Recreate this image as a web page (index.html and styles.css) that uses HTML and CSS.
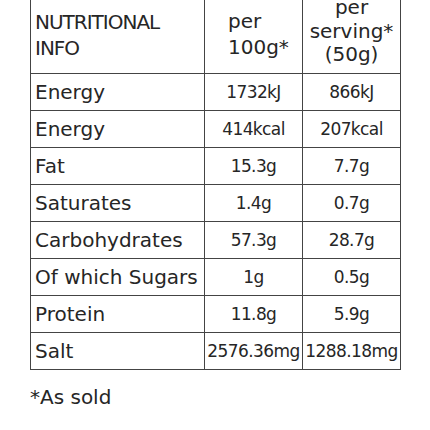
FILE: index.html
```html
<!DOCTYPE html>
<html lang="en">

<head>
    <meta charset="UTF-8">
    <meta name="viewport" content="width=device-width, initial-scale=1.0">
    <title>Nutritional Info</title>
    <link rel="stylesheet" href="styles.css">
</head>

<body>
    <div class="nutrition">
        <table class="facts">
            <colgroup>
                <col class="col-name">
                <col class="col-value">
                <col class="col-value">
            </colgroup>
            <thead>
                <tr>
                    <th class="name">NUTRITIONAL<br>INFO</th>
                    <th class="per-100">per<br>100g*</th>
                    <th class="per-serving">per<br>serving*<br>(50g)</th>
                </tr>
            </thead>
            <tbody>
                <tr>
                    <td class="name">Energy</td>
                    <td class="value">1732kJ</td>
                    <td class="value">866kJ</td>
                </tr>
                <tr>
                    <td class="name">Energy</td>
                    <td class="value">414kcal</td>
                    <td class="value">207kcal</td>
                </tr>
                <tr>
                    <td class="name">Fat</td>
                    <td class="value">15.3g</td>
                    <td class="value">7.7g</td>
                </tr>
                <tr>
                    <td class="name">Saturates</td>
                    <td class="value">1.4g</td>
                    <td class="value">0.7g</td>
                </tr>
                <tr>
                    <td class="name">Carbohydrates</td>
                    <td class="value">57.3g</td>
                    <td class="value">28.7g</td>
                </tr>
                <tr>
                    <td class="name">Of which Sugars</td>
                    <td class="value">1g</td>
                    <td class="value">0.5g</td>
                </tr>
                <tr>
                    <td class="name">Protein</td>
                    <td class="value">11.8g</td>
                    <td class="value">5.9g</td>
                </tr>
                <tr>
                    <td class="name">Salt</td>
                    <td class="value">2576.36mg</td>
                    <td class="value">1288.18mg</td>
                </tr>
            </tbody>
        </table>
        <p class="note">*As sold</p>
    </div>
</body>

</html>
```

FILE: styles.css
```css
body {
    font-family: "DejaVu Sans", sans-serif;
    color: #262626;
    margin: 0;
    padding: 0;
    background-color: #fff;
}

.nutrition {
    padding: 0 30px;
}

.facts {
    border-collapse: collapse;
    table-layout: fixed;
    width: 370px;
    margin-top: -11px;
    font-size: 20px;
    line-height: 25px;
}

.col-name {
    width: 174px;
}

.col-value {
    width: 98px;
}

.facts th,
.facts td {
    border: 1px solid #444;
    font-weight: normal;
    padding: 6.5px 4px 4.5px;
    white-space: nowrap;
}

.facts th {
    vertical-align: bottom;
    line-height: 26px;
    padding-top: 6px;
}

th.name {
    text-align: left;
    letter-spacing: -1px;
    padding-bottom: 12px;
}

th.per-100 {
    text-align: left;
    padding-left: 23px;
    padding-bottom: 13px;
}

th.per-serving {
    text-align: center;
    line-height: 23.5px;
    padding-bottom: 6px;
}

td.name {
    text-align: left;
}

td.value {
    text-align: center;
    font-size: 17px;
    letter-spacing: -0.6px;
    padding-left: 0;
    padding-right: 0;
}

.note {
    font-size: 20px;
    line-height: 25px;
    margin: 15px 0 0;
}
```
